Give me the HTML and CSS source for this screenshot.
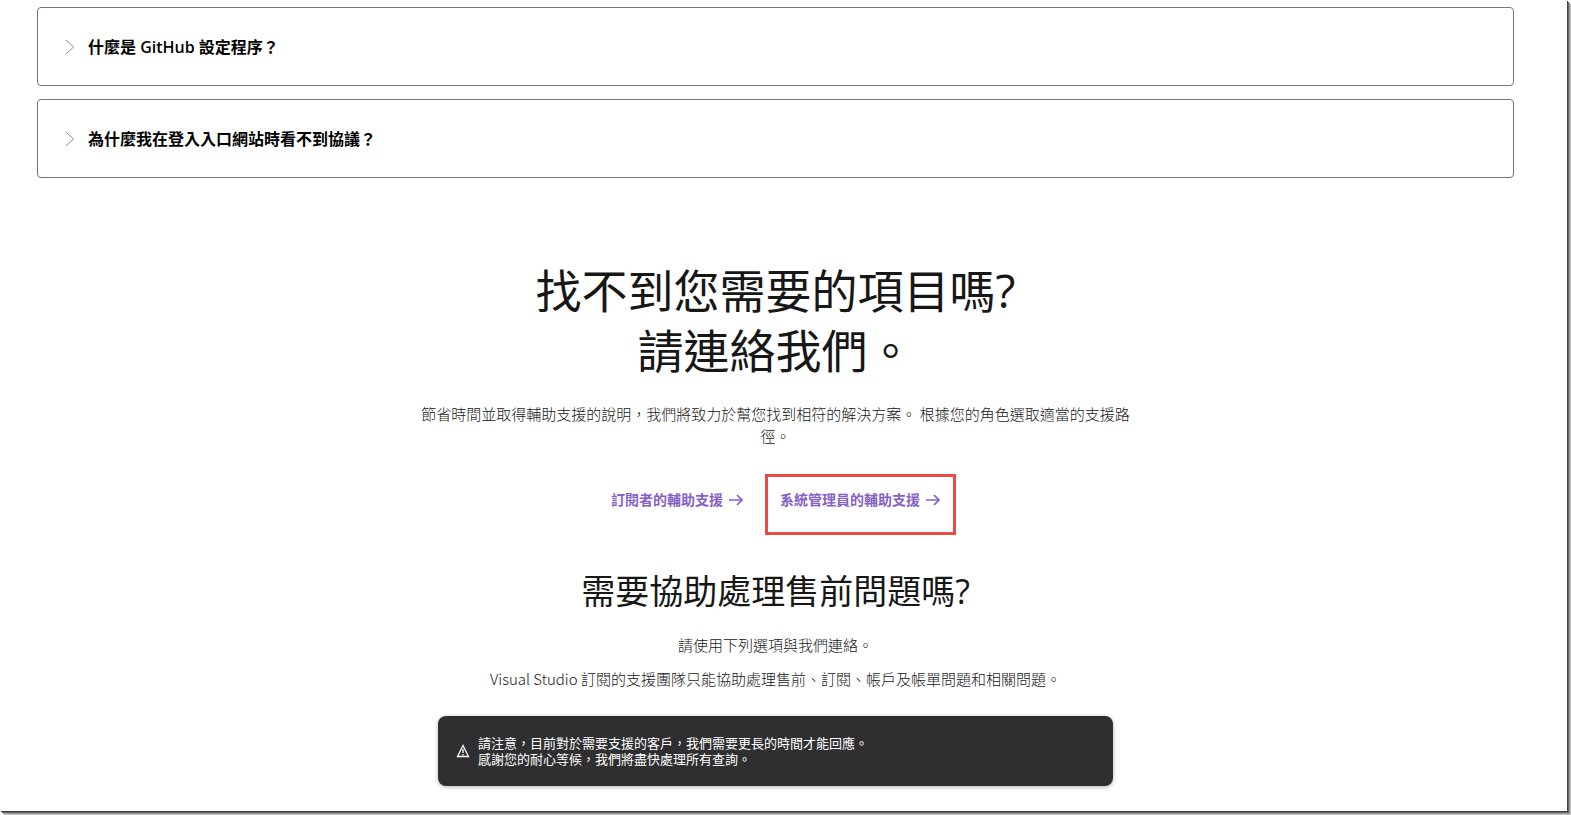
FILE: index.html
```
<!DOCTYPE html>
<html lang="zh-Hant">
<head>
  <meta charset="UTF-8" />
  <meta name="viewport" content="width=device-width, initial-scale=1" />
  <title>Visual Studio 訂閱支援</title>
  <link rel="stylesheet" href="styles.css">
</head>
<body>
  <main class="page">
    <section class="faq">
      <details class="faq-item">
        <summary>
          <svg class="chevron" viewBox="0 0 10 16" aria-hidden="true"><path d="M1 1l7.500 7L1 15" /></svg>
          什麼是 GitHub 設定程序？
        </summary>
      </details>
      <details class="faq-item">
        <summary>
          <svg class="chevron" viewBox="0 0 10 16" aria-hidden="true"><path d="M1 1l7.500 7L1 15" /></svg>
          為什麼我在登入入口網站時看不到協議？
        </summary>
      </details>
    </section>

    <section class="contact">
      <h1>找不到您需要的項目嗎?<br>請連絡我們。</h1>
      <p class="intro">節省時間並取得輔助支援的說明，我們將致力於幫您找到相符的解決方案。 根據您的角色選取適當的支援路徑。</p>

      <div class="support-links">
        <a href="#subscriber">訂閱者的輔助支援
          <svg class="arrow" viewBox="0 0 14 12" aria-hidden="true"><path d="M0 6h13M8 1l5 5-5 5" /></svg>
        </a>
        <a class="highlighted" href="#admin">系統管理員的輔助支援
          <svg class="arrow" viewBox="0 0 14 12" aria-hidden="true"><path d="M0 6h13M8 1l5 5-5 5" /></svg>
        </a>
      </div>

      <h2>需要協助處理售前問題嗎?</h2>
      <p>請使用下列選項與我們連絡。</p>
      <p>Visual Studio 訂閱的支援團隊只能協助處理售前、訂閱、帳戶及帳單問題和相關問題。</p>

      <div class="notice">
        <svg class="warning" viewBox="0 0 14 14" aria-hidden="true">
          <path d="M7 1.500L12.500 12.500H1.500z" />
          <path d="M7 5v4M7 10v1.500" />
        </svg>
        <div>請注意，目前對於需要支援的客戶，我們需要更長的時間才能回應。<br>感謝您的耐心等候，我們將盡快處理所有查詢。</div>
      </div>
    </section>
  </main>
</body>
</html>
```
FILE: styles.css
```
* {
  box-sizing: border-box;
}
body {
  margin: 0;
  padding: 0 4px 4px 0;
  background: #fff;
  color: #171717;
  font-family: "Open Sans", "Noto Sans CJK TC", sans-serif;
}
.page {
  min-height: calc(100vh - 4px);
  padding: 7px 53px 25px 37px;
  box-shadow: 1px 1px 0 #444, 2px 2px 0 #666, 3px 3px 0 #999, 4px 4px 0 #c4c4c4;
}

.faq {
  display: flex;
  flex-direction: column;
  gap: 13px;
}
.faq-item {
  border: 1px solid #757575;
  border-radius: 4px;
}
.faq-item summary {
  display: flex;
  align-items: center;
  gap: 13px;
  padding: 27px 27px 26px;
  color: #000;
  font-size: 16px;
  font-weight: 600;
  line-height: 24px;
  list-style: none;
  cursor: pointer;
}
.chevron {
  width: 10px;
  height: 16px;
  fill: none;
  stroke: #8a8a8a;
}

.contact {
  display: flex;
  flex-direction: column;
  align-items: center;
  margin-top: 82px;
  text-align: center;
}
h1,
h2,
p {
  margin: 0;
}
h1 {
  font-size: 46px;
  font-weight: 400;
  line-height: 60px;
}
h2 {
  margin-top: 56px;
  font-size: 34px;
  font-weight: 400;
  line-height: 48px;
}
p {
  max-width: 712px;
  margin-top: 12px;
  font-family: "Noto Sans CJK TC", sans-serif;
  font-size: 15px;
  font-weight: 300;
  line-height: 22px;
}
h2 + p {
  margin-top: 19px;
}
.intro {
  margin-top: 23px;
}

.support-links {
  display: flex;
  gap: 37px;
  margin-top: 42px;
}
.support-links a {
  position: relative;
  display: flex;
  align-items: center;
  gap: 6px;
  color: #8661c5;
  font-size: 14px;
  font-weight: 600;
  line-height: 22px;
  text-decoration: none;
}
.highlighted::after {
  content: "";
  position: absolute;
  inset: -15px -16px -24px -15px;
  border: 3px solid #eb4b44;
}
.arrow {
  width: 14px;
  height: 12px;
  fill: none;
  stroke: currentColor;
  stroke-width: 1.7;
}

.notice {
  display: flex;
  align-items: center;
  gap: 8px;
  width: 100%;
  max-width: 675px;
  margin-top: 26px;
  padding: 19px 18px;
  border-radius: 8px;
  background: #2f2f31;
  box-shadow: 0 1px 4px rgba(0, 0, 0, 0.3);
  color: #fff;
  font-size: 13px;
  line-height: 16px;
  text-align: left;
}
.warning {
  width: 14px;
  height: 14px;
  fill: none;
  stroke: #fff;
  stroke-width: 1.3;
}
```
